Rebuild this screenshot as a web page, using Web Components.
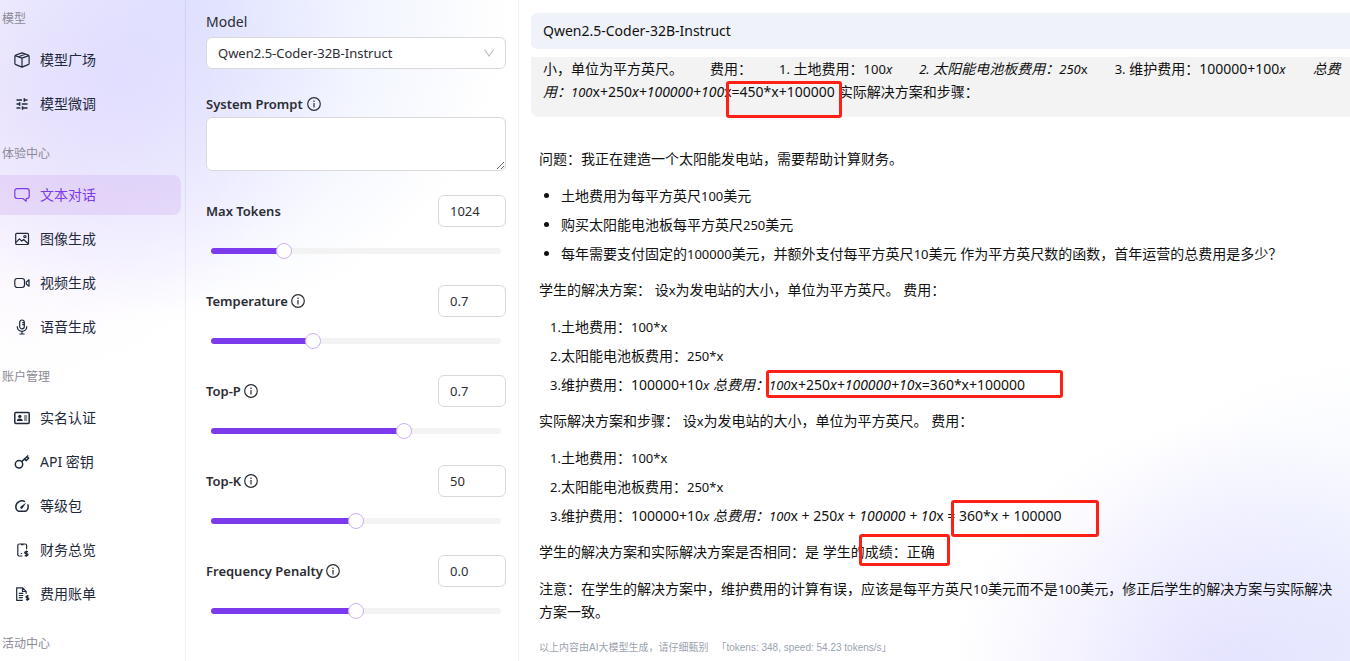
<!DOCTYPE html>
<html lang="zh-CN">
<head>
<meta charset="utf-8">
<title>文本对话</title>
<style>
  html, body { margin: 0; height: 100%; }
  body {
    font-family: "Noto Sans", "Noto Sans CJK SC", sans-serif;
    font-size: 14px;
    color: #1e293b;
    overflow: hidden;
    background:
      radial-gradient(circle 240px at 120px 80px, rgba(216,206,255,.46), rgba(216,206,255,0)),
      radial-gradient(circle 320px at 190px 0px, rgba(208,218,255,.6), rgba(208,218,255,0)),
      radial-gradient(circle 260px at 20px 120px, rgba(240,222,252,.5), rgba(240,222,252,0)),
      radial-gradient(circle 270px at calc(100% - 130px) calc(100% + 30px), rgba(218,214,255,.65), rgba(218,214,255,0)),
      radial-gradient(circle 270px at 100% calc(100% - 30px), rgba(222,229,255,.55), rgba(222,229,255,0)),
      #fff;
  }
</style>
</head>
<body>
<app-shell>
  <side-nav slot="nav">
    <nav-section heading="模型">
      <nav-item icon="cube">模型广场</nav-item>
      <nav-item icon="tune">模型微调</nav-item>
    </nav-section>
    <nav-section heading="体验中心">
      <nav-item icon="chat" active>文本对话</nav-item>
      <nav-item icon="image">图像生成</nav-item>
      <nav-item icon="video">视频生成</nav-item>
      <nav-item icon="mic">语音生成</nav-item>
    </nav-section>
    <nav-section heading="账户管理">
      <nav-item icon="idcard">实名认证</nav-item>
      <nav-item icon="key">API 密钥</nav-item>
      <nav-item icon="gauge">等级包</nav-item>
      <nav-item icon="phone">财务总览</nav-item>
      <nav-item icon="bill">费用账单</nav-item>
    </nav-section>
    <nav-section heading="活动中心"></nav-section>
  </side-nav>

  <param-panel slot="params">
    <model-select></model-select>
    <prompt-field></prompt-field>
    <param-slider label="Max Tokens" value="1024" min="0" max="4096"></param-slider>
    <param-slider label="Temperature" value="0.7" min="0" max="2" info></param-slider>
    <param-slider label="Top-P" value="0.7" min="0.1" max="1" info></param-slider>
    <param-slider label="Top-K" value="50" min="0" max="100" info></param-slider>
    <param-slider label="Frequency Penalty" value="0.0" min="-2" max="2" info></param-slider>
  </param-panel>

  <chat-pane slot="chat"></chat-pane>
</app-shell>

<script>
const define = (name, html, setup) => {
  const template = document.createElement('template');
  template.innerHTML = html;
  customElements.define(name, class extends HTMLElement {
    connectedCallback() {
      if (this.shadowRoot) return;
      const root = this.attachShadow({ mode: 'open' });
      root.append(template.content.cloneNode(true));
      if (setup) setup(this, root);
    }
  });
};

const ICONS = {
  cube: '<path d="M8 .9 14.2 3c.6.2.9.6.9 1.2v7.2c0 .6-.3 1-.9 1.2L8 15.1l-6.200-2.500c-.6-.2-.9-.6-.9-1.200V4.200c0-.6.3-1 .9-1.200zM1.200 3.600 8 6.100l6.800-2.500M8 6.100v9M4.500 4.700l6.700-2.500"/>',
  tune: '<path d="M2.500 4H8M10.300 4h3.200M10.300 2.200v3.600M2.500 8h3M5.600 6.200v3.600M7.800 8h5.700M2.500 12h3.800M8.500 12h5M8.500 10.200v3.600" stroke-width="1.500"/>',
  chat: '<path d="M3.200 1.700h9.600c1.400 0 2.400.9 2.400 2.200v5.400c0 1.300-1 2.200-2.400 2.200h-.6v2.700l-3.400-2.700H3.200C1.800 11.500.8 10.600.8 9.300V3.900c0-1.300 1-2.200 2.400-2.200z"/>',
  image: '<rect x="1.700" y="2.300" width="12.800" height="11.200" rx="1"/><path d="m2 11.400 3.500-3.600 2.200 2.300 1.900-1.600 4.700 4.300"/><circle cx="10.900" cy="5.600" r="1.100"/>',
  video: '<rect x=".8" y="3.500" width="9.700" height="9" rx="2.400"/><path d="M12.300 7 15 4.800v6.400L12.300 9z"/>',
  mic: '<rect x="5.700" y="1" width="4.600" height="8.800" rx="2.300"/><path d="M3.300 7.300v.8c0 2.400 2.100 4.200 4.700 4.200s4.700-1.800 4.700-4.200v-.8M8 12.400v2.400M5.400 15h5.200M8.300 3.700h2M8.300 5.700h2"/>',
  idcard: '<rect x=".8" y="2.500" width="14.400" height="11" rx="1" stroke-width="1.500"/><path d="M10 6h3.200M10 8h3.200M10 10h3.200"/><g fill="currentColor" stroke="none"><circle cx="5.800" cy="6.400" r="1.600"/><path d="M2.900 11c0-1.600 1.200-2.400 2.900-2.400S8.700 9.400 8.700 11z"/></g>',
  key: '<circle cx="5" cy="10.300" r="3.700" stroke-width="1.500"/><path d="m7.700 7.600 6.500-6.100M10.600 5l1.500 1.600 2.500-2.300-1.500-1.700" stroke-width="1.500"/>',
  gauge: '<path d="M4.100 13.200h7.800c1.500-1.100 2.300-2.600 2.300-4.400 0-.9-.2-1.700-.6-2.500M11 3.700A6.200 6.200 0 0 0 1.800 8.800c0 1.800.8 3.300 2.300 4.400" stroke-width="1.500"/><path d="m6.700 8.400 5.600-4-3.800 5.800c-.5.600-1.200.7-1.800.2s-.6-1.400 0-2z" fill="currentColor" stroke="none"/>',
  phone: '<path d="M8.500 14H5.200c-.8 0-1.400-.5-1.400-1.300V3.300C3.800 2.500 4.400 2 5.200 2h6c.8 0 1.400.5 1.400 1.300v4M7 2.600h2.500M6.800 11.500h1.400"/><path d="M14 9.600h-2.100c-.8 0-1.200.4-1.200 1s.4 1 1.200 1h.9c.8 0 1.200.4 1.200 1s-.4 1-1.200 1h-2.100M12.400 8.500v6.300" stroke-width="1.300"/>',
  bill: '<path d="M8.800 14.300H2.700V1.900h6l3.400 3.400v2.500M8.500 2.200v3.300h3.400M4.800 7.300h4.500M4.800 9.500h4.500M4.800 11.700h4"/><path d="M14.800 10h-1.700c-.7 0-1.100.4-1.100.9s.4.9 1.100.9h.7c.7 0 1.100.4 1.100.9s-.4.900-1.100.900H12M13.400 9v5.700"/>'
};

define('app-shell', `
<style>
  :host { display: grid; grid-template-columns: 186px 333px minmax(0, 1fr); height: 100vh; }
  ::slotted(*) { min-width: 0; min-height: 0; overflow: hidden; }
  ::slotted([slot="nav"]), ::slotted([slot="params"]) { border-right: 1px solid rgba(30, 20, 80, .07); }
</style>
<slot name="nav"></slot><slot name="params"></slot><slot name="chat"></slot>`);

define('side-nav', `
<style>
  :host { display: block; }
  nav { display: flex; flex-direction: column; }
  ::slotted(:first-child) { --heading-top: 9px; }
</style>
<nav><slot></slot></nav>`);

define('nav-section', `
<style>
  :host { display: block; }
  h2 { margin: 0; padding: var(--heading-top, 20px) 2px 11px; font-size: 12px; line-height: 20px; font-weight: 400; color: #8c8a94; }
  div { display: flex; flex-direction: column; gap: 4px; padding-right: 4px; }
</style>
<h2></h2><div><slot></slot></div>`,
(host, root) => { root.querySelector('h2').textContent = host.getAttribute('heading'); });

define('nav-item', `
<style>
  :host { display: block; }
  a { display: flex; align-items: center; gap: 10px; height: 40px; padding-left: 14px; border-radius: 0 8px 8px 0; color: #1e293b; text-decoration: none; }
  span { padding-bottom: 2px; }
  :host([active]) a { color: #7c3aed; background: rgba(206, 170, 240, .3); }
  svg { width: 16px; height: 16px; flex: none; fill: none; stroke: currentColor; stroke-width: 1.2; stroke-linejoin: round; }
</style>
<a href="#"><svg viewBox="0 0 16 16" aria-hidden="true"></svg><span><slot></slot></span></a>`,
(host, root) => {
  root.querySelector('svg').innerHTML = ICONS[host.getAttribute('icon')];
  if (host.hasAttribute('active')) root.querySelector('a').setAttribute('aria-current', 'page');
});

define('info-icon', `
<style>
  :host { display: inline-flex; }
  svg { width: 14px; height: 14px; }
</style>
<svg viewBox="0 0 14 14" fill="none" stroke="#2b2d33" stroke-width="1.200" aria-hidden="true">
  <circle cx="7" cy="7" r="6.300"/><path d="M7 6v4.400M7 3.600v1.300"/>
</svg>`);

define('param-panel', `
<style>
  :host { display: block; }
  form { display: flex; flex-direction: column; padding: 12px 12px 0 20px; color: #2b2d33; }
</style>
<form><slot></slot></form>`);

define('model-select', `
<style>
  :host { display: grid; gap: 5px; margin-bottom: 24px; }
  label { font-size: 14px; line-height: 20px; }
  .box { display: grid; align-items: center; }
  select, svg { grid-area: 1 / 1; }
  select { appearance: none; width: 100%; height: 32px; box-sizing: border-box; padding: 0 30px 0 11px; border: 1px solid #d9d9d9; border-radius: 6px; background: #fff; font: inherit; font-size: 13px; color: #2b2d33; }
  svg { justify-self: end; width: 12px; height: 12px; margin-right: 11px; pointer-events: none; }
</style>
<label for="model">Model</label>
<div class="box">
  <select id="model"><option>Qwen2.5-Coder-32B-Instruct</option></select>
  <svg viewBox="0 0 12 12" fill="none" stroke="#bfbfbf" stroke-width="1.200" aria-hidden="true"><path d="m1.500 2.500 4.500 6.500 4.500-6.500"/></svg>
</div>`);

define('prompt-field', `
<style>
  :host { display: grid; gap: 2px; margin-bottom: 24px; }
  label { display: flex; align-items: center; gap: 4px; font-size: 13px; font-weight: 600; line-height: 22px; }
  textarea { display: block; box-sizing: border-box; width: 100%; height: 54px; padding: 4px 11px; border: 1px solid #d9d9d9; border-radius: 6px; background: #fff; font: inherit; font-size: 13px; resize: vertical; }
</style>
<label for="prompt">System Prompt <info-icon></info-icon></label>
<textarea id="prompt"></textarea>`);

define('param-slider', `
<style>
  :host { display: grid; gap: 16px; margin-bottom: 26px; }
  .head { display: flex; align-items: center; justify-content: space-between; }
  label { display: flex; align-items: center; gap: 3px; font-size: 13px; font-weight: 600; line-height: 22px; }
  .num { box-sizing: border-box; width: 68px; height: 32px; padding: 0 11px; border: 1px solid #d9d9d9; border-radius: 6px; background: #fff; font: inherit; font-size: 13px; color: #2b2d33; }
  .track { display: grid; align-items: center; height: 16px; margin: 0 5px; }
  .rail, .range { grid-area: 1 / 1; }
  .rail { height: 6px; border-radius: 3px; background: linear-gradient(to right, #7c3aed var(--at), #f3f3f3 var(--at)); }
  .range { appearance: none; height: 16px; margin: 0 -8px; background: none; }
  .range::-webkit-slider-thumb { appearance: none; box-sizing: border-box; width: 16px; height: 16px; border: 1px solid #cdaef8; border-radius: 50%; background: #fff; }
</style>
<div class="head">
  <label for="num"></label>
  <input class="num" id="num" type="text" inputmode="decimal">
</div>
<div class="track">
  <div class="rail"></div>
  <input class="range" type="range" step="any">
</div>`,
(host, root) => {
  const [label, value, min, max] = ['label', 'value', 'min', 'max'].map(n => host.getAttribute(n));
  const num = root.querySelector('.num'), range = root.querySelector('.range');
  root.querySelector('label').textContent = label;
  if (host.hasAttribute('info')) root.querySelector('label').append(document.createElement('info-icon'));
  num.value = value;
  range.min = min; range.max = max; range.value = value;
  range.setAttribute('aria-label', label);
  const paint = () => host.style.setProperty('--at', (range.value - min) / (max - min) * 100 + '%');
  range.addEventListener('input', () => { num.value = (+range.value).toFixed(max > 10 ? 0 : 1); paint(); });
  num.addEventListener('change', () => { range.value = num.value; paint(); });
  paint();
});

/* Plain runs of Latin letters and digits are set one size below the Chinese text
   around them; sums keep the full size. */
const mixed = html => html.replace(/(<[^>]+>)|([!-;=?-~]+(?: [!-;=?-~]+)*)/g,
  (all, tag, latin) => tag || (latin.includes('+') ? latin : `<span class="latin">${latin}</span>`));

define('chat-pane', `
<style>
  :host { display: block; position: relative; padding-left: 12px; color: #111; }
  .latin { font-size: 13px; line-height: 1; }
  h1 { margin: 13px 0 8px; padding: 0 12px; font-size: 14px; font-weight: 400; line-height: 36px; border-radius: 6px 0 0 6px; background: #eff3f9; }
  .user { padding: 0 4px 14px 12px; line-height: 23px; border-radius: 0 0 0 8px; background: #f3f3f3; }
  .user p { margin: 0; }
  .gap { margin-left: 27px; }
  .near { margin-left: 4px; }
  article { padding: 30px 8px 0; line-height: 23px; }
  article p { margin: 0 0 14px; }
  ul, ol { margin: 0 0 13px; padding-left: 22px; list-style: none; display: grid; gap: 6px; }
  li::before { display: inline-block; width: 22px; margin-left: -22px; }
  ul li::before { content: ""; height: 5px; width: 5px; margin: 0 12px 3px -17px; border-radius: 50%; background: #111; }
  ol { counter-reset: step; }
  ol li { counter-increment: step; }
  ol li::before { content: counter(step) "."; font-size: 13px; line-height: 1; text-align: right; }
  footer { display: flex; gap: 8px; padding: 3px 8px 0; font-family: "Liberation Sans", "Noto Sans CJK SC", sans-serif; font-size: 10px; line-height: 16px; color: #9ca3af; }
</style>
<h1>Qwen2.5-Coder-32B-Instruct</h1>
<section class="user"><p>${mixed('小，单位为平方英尺。<span class="gap">费用：</span><span class="gap">1. 土地费用：100</span><em>x<span class="gap">2. 太阳能电池板费用：250</span></em>x<span class="gap">3. 维护费用：100000+100</span><em>x<span class="gap">总费<wbr>用：100</span></em>x+250<em>x+100000+100</em>x=450*x+100000<span class="near">实际解决方案和步骤：</span>')}</p></section>
<article>
  ${mixed(`<p>问题：我正在建造一个太阳能发电站，需要帮助计算财务。</p>
  <ul>
    <li>土地费用为每平方英尺100美元</li>
    <li>购买太阳能电池板每平方英尺250美元</li>
    <li>每年需要支付固定的100000美元，并额外支付每平方英尺10美元 作为平方英尺数的函数，首年运营的总费用是多少？</li>
  </ul>
  <p>学生的解决方案： 设x为发电站的大小，单位为平方英尺。 费用：</p>
  <ol>
    <li>土地费用：100*x</li>
    <li>太阳能电池板费用：250*x</li>
    <li>维护费用：100000+10<em>x 总费用：100</em>x+250<em>x+100000+10</em>x=360*x+100000</li>
  </ol>
  <p>实际解决方案和步骤： 设x为发电站的大小，单位为平方英尺。 费用：</p>
  <ol>
    <li>土地费用：100*x</li>
    <li>太阳能电池板费用：250*x</li>
    <li>维护费用：100000+10<em>x 总费用：100</em>x + 250<em>x + 100000 + 10</em>x = 360*x + 100000</li>
  </ol>
  <p>学生的解决方案和实际解决方案是否相同：是 学生的成绩：正确</p>
  <p>注意：在学生的解决方案中，维护费用的计算有误，应该是每平方英尺10美元而不是100美元，修正后学生的解决方案与实际解决<wbr>方案一致。</p>`)}
</article>
<footer><span>以上内容由AI大模型生成，请仔细甄别</span><span>「tokens: 348, speed: 54.23 tokens/s」</span></footer>
<red-frame style="left:207px;top:81px;width:116px;height:37px"></red-frame>
<red-frame style="left:247px;top:370px;width:297px;height:28px"></red-frame>
<red-frame style="left:432px;top:500px;width:148px;height:37px"></red-frame>
<red-frame style="left:340px;top:534px;width:91px;height:32px"></red-frame>`);

/* Marker frame laid over the conversation. */
define('red-frame', `
<style>
  :host { display: block; position: absolute; box-sizing: border-box; border: 3px solid #ff2015; border-radius: 3px; pointer-events: none; }
</style>`);
</script>
</body>
</html>
